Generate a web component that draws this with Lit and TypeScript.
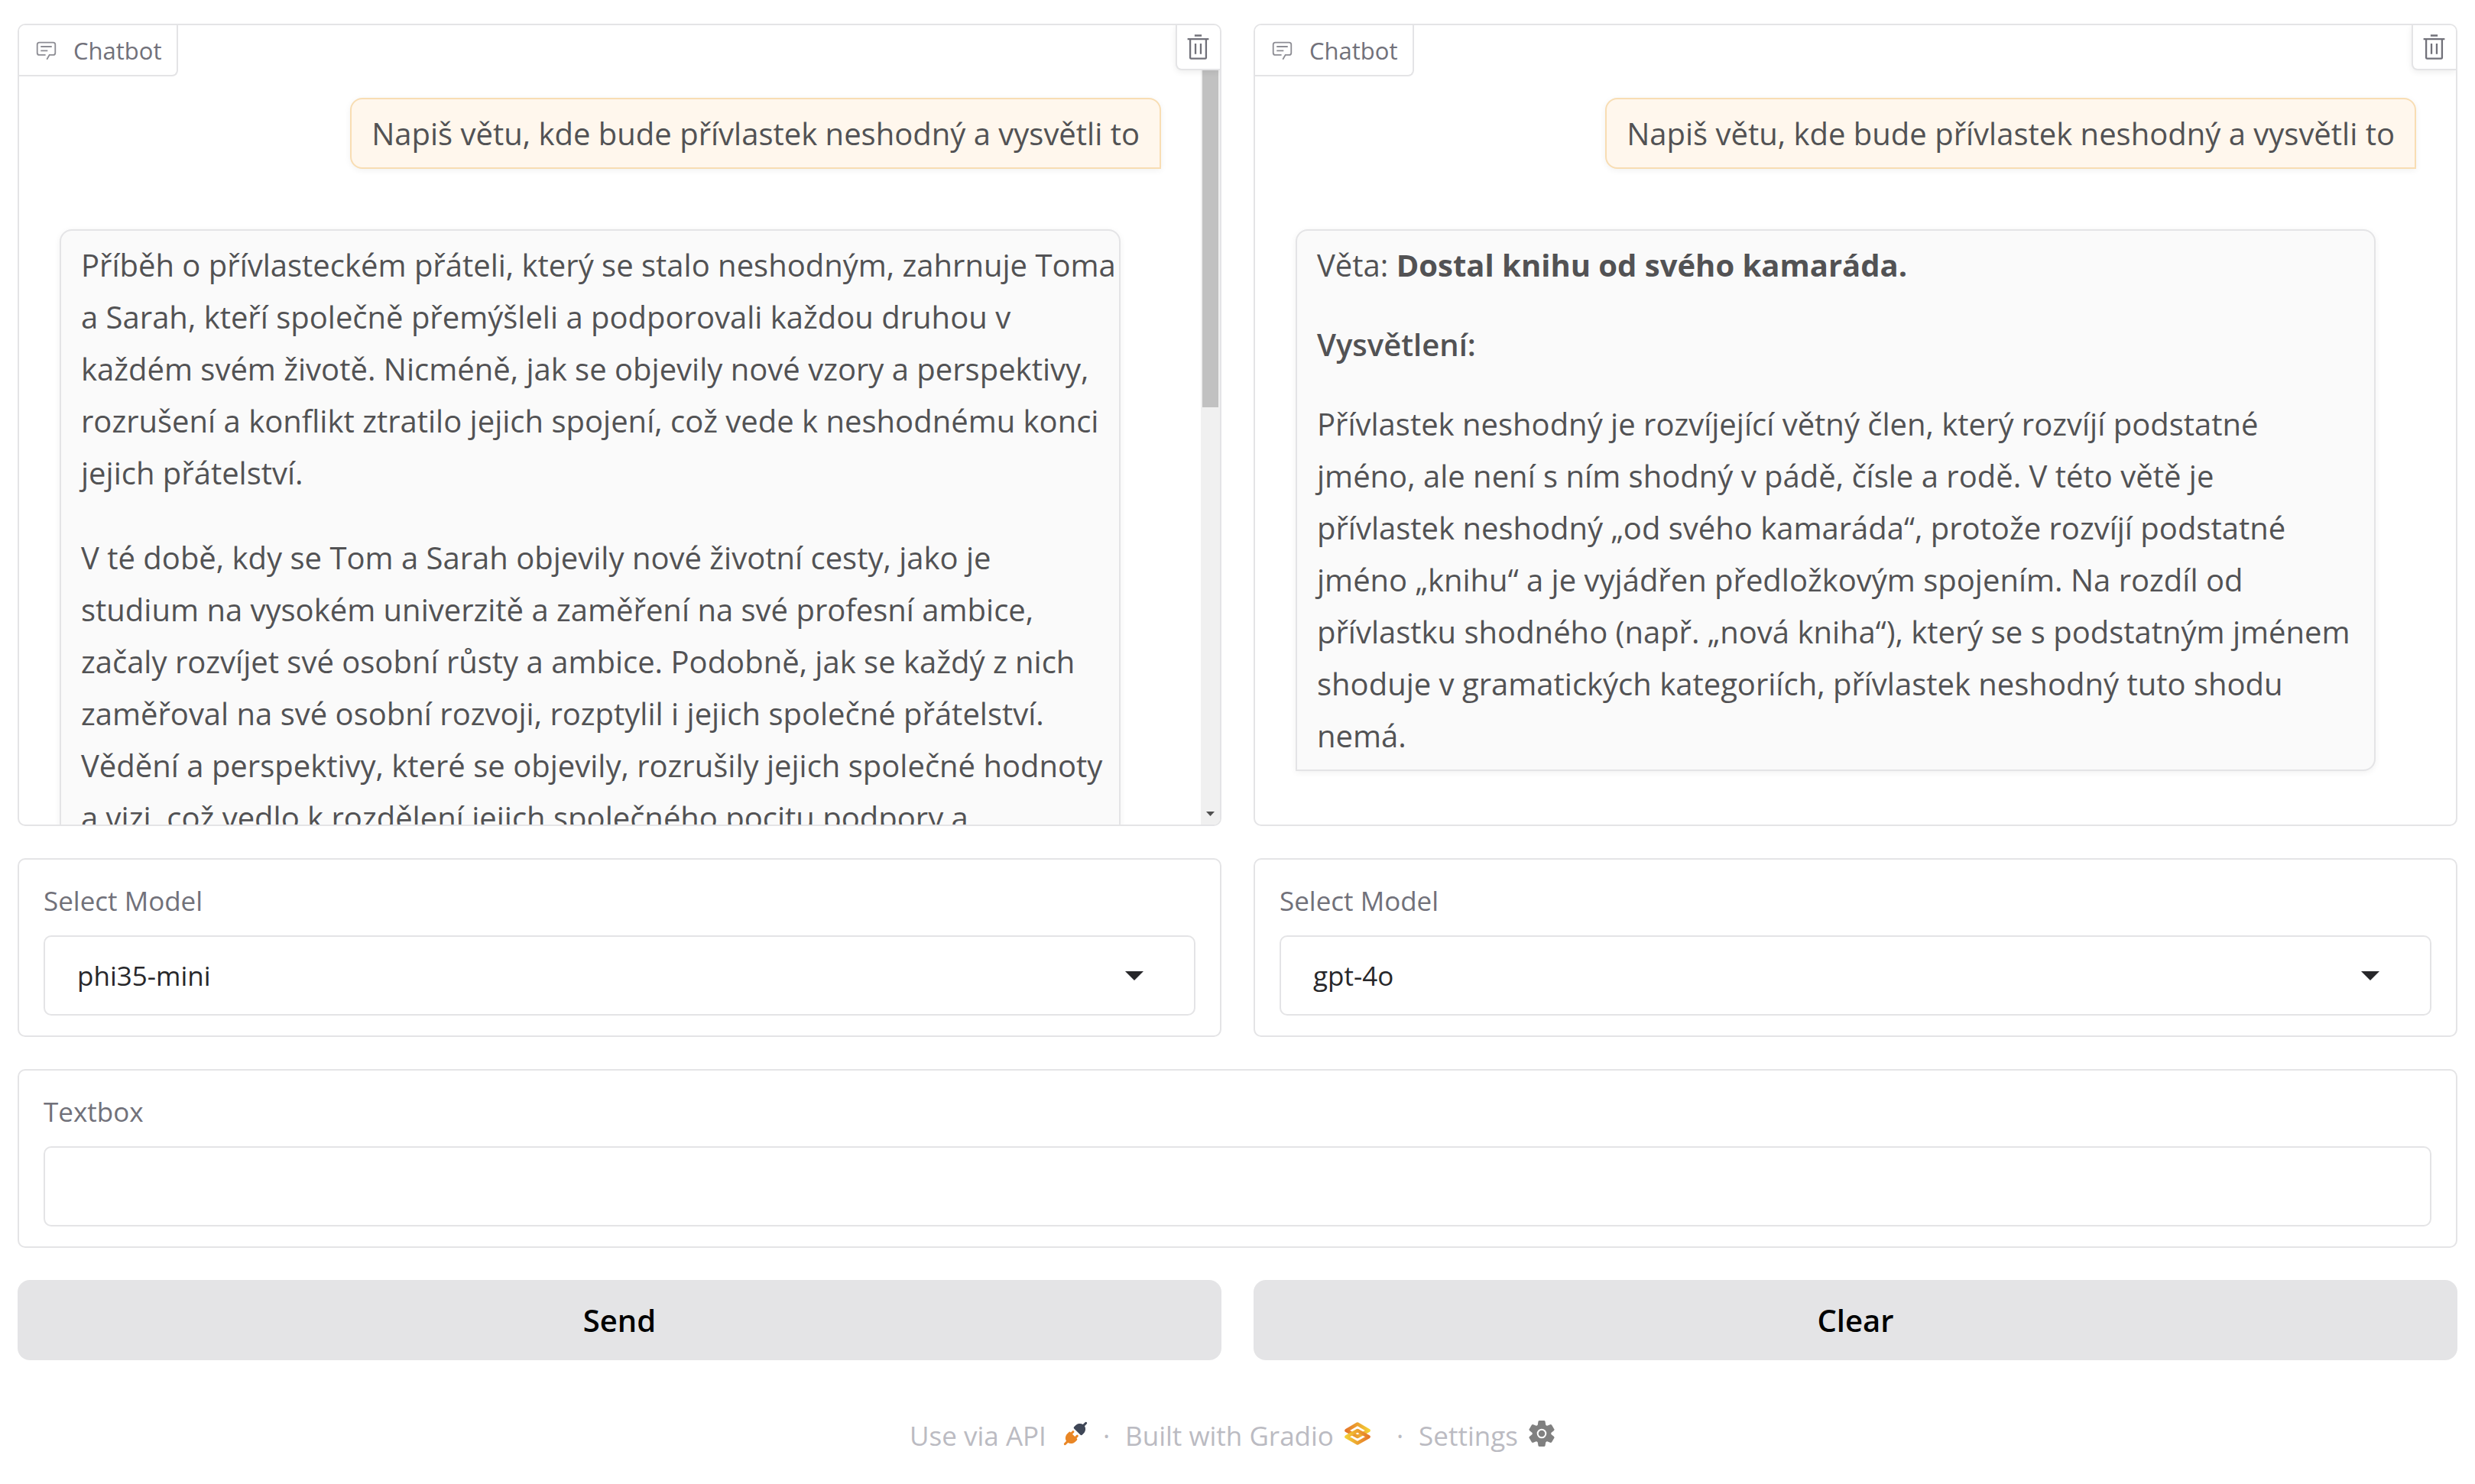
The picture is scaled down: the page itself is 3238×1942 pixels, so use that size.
import { LitElement, html, css, svg, nothing } from "lit";
import { customElement, property } from "lit/decorators.js";
import type { TemplateResult } from "lit";

const theme = css`
  :host {
    display: block;
    min-width: 0;
    --line: #e4e4e6;
    --muted: #71717a;
    --ink: #27272a;
    --radius: 10px;
    font-family: "Open Sans", "Noto Sans", sans-serif;
  }
  * {
    box-sizing: border-box;
  }
  .panel {
    border: 2px solid var(--line);
    border-radius: var(--radius);
    background: #fff;
  }
  .field {
    display: flex;
    flex-direction: column;
    gap: 20px;
    padding: 28px 32px 26px;
  }
  .label {
    color: var(--muted);
    font-size: 35px;
    line-height: 51px;
  }
  .control {
    width: 100%;
    height: 105px;
    margin: 0;
    padding: 0 42px;
    border: 2px solid var(--line);
    border-radius: var(--radius);
    background: #fff;
    color: var(--ink);
    font: inherit;
    font-size: 35px;
    appearance: none;
    outline: none;
  }
`;

const chatIcon = html`<svg class="chat-icon" viewBox="0 0 32 32" aria-hidden="true">
  <path d="M17.74 30L16 29l4-7h6a2 2 0 0 0 2-2V8a2 2 0 0 0-2-2H6a2 2 0 0 0-2 2v12a2 2 0 0 0 2 2h9v2H6a4 4 0 0 1-4-4V8a4 4 0 0 1 4-4h20a4 4 0 0 1 4 4v12a4 4 0 0 1-4 4h-4.84Z" />
  <path d="M8 10h16v2H8zm0 6h10v2H8z" />
</svg>`;

const trashIcon = html`<svg class="trash-icon" viewBox="0 0 32 32" aria-hidden="true">
  <path d="M12 12h2v12h-2zm6 0h2v12h-2z" />
  <path d="M4 6v2h2v20a2 2 0 0 0 2 2h16a2 2 0 0 0 2-2V8h2V6zm4 22V8h16v20zm4-26h8v2h-8z" />
</svg>`;

@customElement("chat-panel")
class ChatPanel extends LitElement {
  @property() question = "";
  @property({ attribute: false }) answer: TemplateResult[] = [];
  @property({ type: Boolean }) scrolls = false;

  static styles = [
    theme,
    css`
      .chat {
        position: relative;
        display: flex;
        height: 1050px;
        overflow: hidden;
      }
      .tag {
        position: absolute;
        top: 0;
        left: 0;
        display: flex;
        align-items: center;
        gap: 21px;
        height: 67px;
        padding: 0 20px 0 21px;
        border: solid var(--line);
        border-width: 0 2px 2px 0;
        border-radius: 0 0 8px 0;
        background: #fff;
        color: var(--muted);
        font-size: 31px;
        line-height: 48px;
      }
      .chat-icon {
        width: 29px;
        height: 29px;
        fill: currentColor;
        opacity: 0.8;
      }
      .clear {
        position: absolute;
        top: 0;
        right: 0;
        display: flex;
        padding: 10px 10px 10px 9px;
        border: solid var(--line);
        border-width: 0 0 2px 2px;
        border-radius: 0 0 0 8px;
        background: #fff;
        color: var(--muted);
        box-shadow: 0 2px 8px rgb(0 0 0 / 8%);
      }
      .trash-icon {
        width: 37px;
        height: 37px;
        fill: currentColor;
      }
      .messages {
        display: flex;
        flex: 1;
        flex-direction: column;
        gap: 79px;
        min-width: 0;
        padding: 95px 52px 0 53px;
        overflow: hidden;
      }
      .bubble {
        padding: 11px 26px 10px;
        border: 2px solid var(--line);
        border-radius: 16px;
        box-shadow: 0 2px 8px rgb(0 0 0 / 6%);
        color: #525254;
        font-size: 40px;
        line-height: 68px;
      }
      .user {
        align-self: flex-end;
        border-color: #f8ddb3;
        border-bottom-right-radius: 0;
        background: #fff7ed;
      }
      .bot {
        display: flex;
        flex-direction: column;
        gap: 36px;
        margin-right: 53px;
        border-bottom-left-radius: 0;
        background: #fafafa;
      }
      .long {
        gap: 43px;
        padding-right: 8px;
      }
      p {
        margin: 0;
      }
      b {
        font-weight: 700;
      }
      strong {
        font-weight: 600;
      }
      .opening {
        white-space: nowrap;
      }
      .scrollbar {
        display: flex;
        flex-direction: column;
        align-items: center;
        width: 25px;
        padding: 25px 0 11px;
        background: #f0f0f0;
      }
      .thumb {
        width: 21px;
        height: 47%;
        background: #c1c1c1;
      }
      .arrow {
        width: 11px;
        height: 6px;
        margin-top: auto;
        fill: #505050;
      }
    `,
  ];

  render() {
    return html`<section class="panel chat">
      <div class="messages">
        <div class="bubble user">${this.question}</div>
        <div class="bubble bot ${this.scrolls ? "long" : ""}">${this.answer.map((part) => html`<p>${part}</p>`)}</div>
      </div>
      ${this.scrolls
        ? html`<div class="scrollbar">
            <div class="thumb"></div>
            <svg class="arrow" viewBox="0 0 11 6"><path d="M0 0h11L5.5 6z" /></svg>
          </div>`
        : nothing}
      <div class="tag">${chatIcon}<span>Chatbot</span></div>
      <button class="clear" aria-label="Clear">${trashIcon}</button>
    </section>`;
  }
}

@customElement("model-select")
class ModelSelect extends LitElement {
  @property() value = "";

  static styles = [
    theme,
    css`
      .picker {
        display: grid;
        align-items: center;
      }
      .picker > * {
        grid-area: 1 / 1;
      }
      .caret {
        justify-self: end;
        width: 24px;
        height: 12px;
        margin-right: 68px;
        fill: var(--ink);
        pointer-events: none;
      }
    `,
  ];

  render() {
    return html`<div class="panel field">
      <label class="label" for="model">Select Model</label>
      <div class="picker">
        <select class="control" id="model">
          <option selected>${this.value}</option>
        </select>
        <svg class="caret" viewBox="0 0 24 12" aria-hidden="true"><path d="M0 0h24L12 12z" /></svg>
      </div>
    </div>`;
  }
}

const plugIcon = html`<svg class="icon plug" viewBox="0 0 28 28" aria-hidden="true">
  <path fill="#3f4757" d="M26.94 2.94a1.333 1.333 0 0 0-1.88-1.88l-2.49 2.48c-1.45-.95-3.03-1.11-4.4-.9-1.62.25-3.06 1.03-3.78 1.75l-2 2a1.333 1.333 0 0 0 0 1.89l7.33 7.33c.52.52 1.37.52 1.89 0l2-2c.72-.72 1.5-2.16 1.75-3.79.21-1.36.05-2.94-.9-4.39z" />
  <path fill="#e98625" d="M1.06 25.06a1.333 1.333 0 0 0 1.88 1.88l2.49-2.48c1.45.95 3.03 1.11 4.4.9 1.62-.25 3.06-1.03 3.78-1.75l2-2a1.333 1.333 0 0 0 0-1.89l-7.33-7.33a1.333 1.333 0 0 0-1.89 0l-2 2c-.72.72-1.5 2.16-1.75 3.79-.21 1.36-.05 2.94.9 4.39z" />
  <path fill="none" stroke="#e98625" stroke-width="2.67" stroke-linecap="round" d="M11.3 12l-3 3M16 16.7l-3 3" />
</svg>`;

const gradioIcon = html`<svg class="icon gradio" viewBox="0 0 34 30" aria-hidden="true">
  <defs>
    <linearGradient id="warm" gradientUnits="userSpaceOnUse" x1="2" y1="0" x2="32" y2="0">
      <stop offset="0" stop-color="#e5762a" /><stop offset="1" stop-color="#f3cf35" />
    </linearGradient>
    <linearGradient id="cool" gradientUnits="userSpaceOnUse" x1="2" y1="0" x2="32" y2="0">
      <stop offset="0" stop-color="#f3cf35" /><stop offset="1" stop-color="#e5762a" />
    </linearGradient>
  </defs>
  <path fill="none" stroke="url(#warm)" stroke-width="4.6" stroke-linejoin="round" d="M17 2.6L31.5 11 17 19 2.5 11z" />
  <path fill="none" stroke="url(#cool)" stroke-width="4.6" stroke-linejoin="round" d="M17 11L31.5 19.2 17 27.4 2.5 19.2z" />
</svg>`;

const gearTooth = (turn: number) =>
  svg`<path transform="rotate(${turn} 17 17)" d="M13.5 0h7l1 1 1 6v20l-1 6-1 1h-7l-1-1-1-6V7l1-6z" />`;

const gearIcon = html`<svg class="icon gear" viewBox="0 0 34 34" aria-hidden="true">
  <circle cx="17" cy="17" r="12.3" />
  ${[0, 60, 120].map(gearTooth)}
  <circle cx="17" cy="17" r="5.3" fill="none" stroke="#fff" stroke-width="2" />
</svg>`;

const question = "Napiš větu, kde bude přívlastek neshodný a vysvětli to";

const phiAnswer = [
  html`<span class="opening">Příběh o přívlasteckém přáteli, který se stalo neshodným, zahrnuje Toma</span><br />a Sarah, kteří společně přemýšleli a podporovali každou druhou v každém svém životě. Nicméně, jak se objevily nové vzory a perspektivy, rozrušení a konflikt ztratilo jejich spojení, což vede k neshodnému konci jejich přátelství.`,
  html`V té době, kdy se Tom a Sarah objevily nové životní cesty, jako je studium na vysokém univerzitě a zaměření na své profesní ambice, začaly rozvíjet své osobní růsty a ambice. Podobně, jak se každý z nich zaměřoval na své osobní rozvoji, rozptylil i jejich společné přátelství. Vědění a perspektivy, které se objevily, rozrušily jejich společné hodnoty a vizi, což vedlo k rozdělení jejich společného pocitu podpory a`,
];

const gptAnswer = [
  html`Věta: <b>Dostal knihu od svého kamaráda.</b>`,
  html`<strong>Vysvětlení:</strong>`,
  html`Přívlastek neshodný je rozvíjející větný člen, který rozvíjí podstatné jméno, ale není s ním shodný v pádě, čísle a rodě. V této větě je přívlastek neshodný „od svého kamaráda“, protože rozvíjí podstatné jméno „knihu“ a je vyjádřen předložkovým spojením. Na rozdíl od přívlastku shodného (např. „nová kniha“), který se s podstatným jménem shoduje v gramatických kategoriích, přívlastek neshodný tuto shodu nemá.`,
];

@customElement("app-root")
class AppRoot extends LitElement {
  static styles = [
    theme,
    css`
      .page {
        display: flex;
        flex-direction: column;
        gap: 42px;
        padding: 31px 23px;
      }
      .row {
        display: grid;
        grid-template-columns: 1fr 1fr;
        gap: 42px;
      }
      .action {
        height: 105px;
        padding: 0;
        border: 0;
        border-radius: 16px;
        background: #e4e4e6;
        color: #000;
        font: inherit;
        font-size: 40px;
        font-weight: 600;
      }
      footer {
        display: flex;
        align-items: center;
        justify-content: center;
        margin-top: 31px;
        color: #bbbbc2;
        font-size: 35px;
        line-height: 51px;
      }
      .link {
        display: flex;
        align-items: center;
        color: inherit;
        text-decoration: none;
      }
      .dot {
        padding: 0 20px;
      }
      .icon {
        margin-bottom: 5px;
      }
      .plug {
        width: 32px;
        height: 32px;
        margin-left: 22px;
      }
      .gradio {
        width: 34px;
        height: 30px;
        margin-left: 14px;
        margin-right: 14px;
      }
      .gear {
        width: 34px;
        height: 34px;
        margin-left: 14px;
        margin-right: 14px;
        fill: #808080;
      }
    `,
  ];

  render() {
    return html`<main class="page">
      <div class="row">
        <chat-panel .question=${question} .answer=${phiAnswer} scrolls></chat-panel>
        <chat-panel .question=${question} .answer=${gptAnswer}></chat-panel>
      </div>
      <div class="row">
        <model-select value="phi35-mini"></model-select>
        <model-select value="gpt-4o"></model-select>
      </div>
      <div class="panel field">
        <label class="label" for="prompt">Textbox</label>
        <input class="control" id="prompt" type="text" />
      </div>
      <div class="row">
        <button class="action">Send</button>
        <button class="action">Clear</button>
      </div>
      <footer>
        <a class="link" href="#api">Use via API ${plugIcon}</a>
        <span class="dot">·</span>
        <a class="link" href="#gradio">Built with Gradio ${gradioIcon}</a>
        <span class="dot">·</span>
        <a class="link" href="#settings">Settings ${gearIcon}</a>
      </footer>
    </main>`;
  }
}
